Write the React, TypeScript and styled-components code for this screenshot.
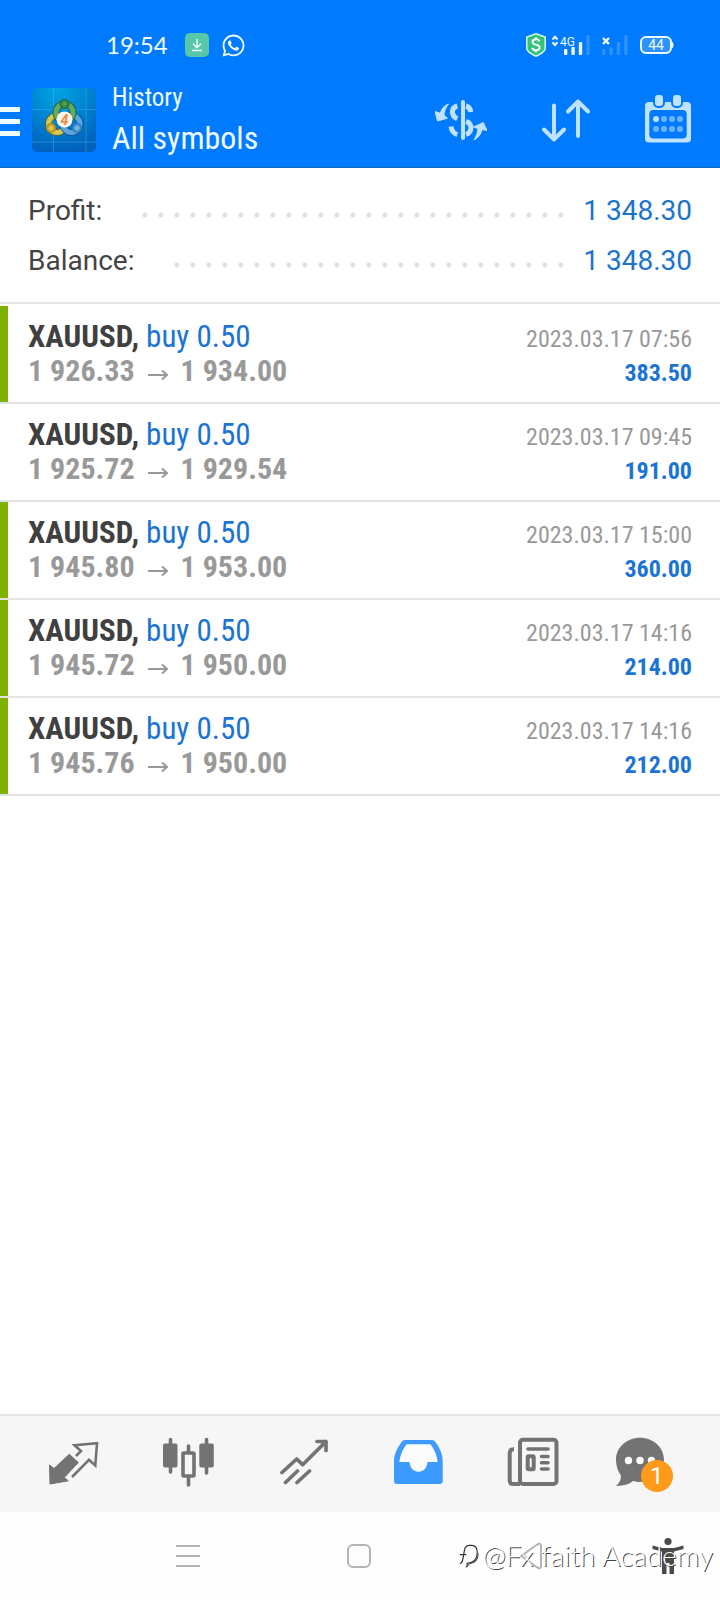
import React from "react";
import styled, { createGlobalStyle } from "styled-components";
import { FaWhatsapp } from "react-icons/fa";

const condensed = `"Roboto Condensed", "Liberation Sans Narrow", Roboto, sans-serif`;
const regular = `Roboto, sans-serif`;

const GlobalStyle = createGlobalStyle`
  * { box-sizing: border-box; }
  body { margin: 0; background: #fff; font-family: ${regular}; }
  h1, p, ul, dl, dd { margin: 0; padding: 0; }
  ul { list-style: none; }
  button { border: 0; padding: 0; background: none; font: inherit; color: inherit; cursor: pointer; }
  svg { display: block; flex: none; }
`;

const Page = styled.div`
  min-height: 100vh;
  display: flex;
  flex-direction: column;
`;

const Header = styled.header`
  background: #007aff;
  color: #effcff;
  border-bottom: 1px solid #1068b8;
`;

const StatusBar = styled.div`
  display: flex;
  align-items: center;
  justify-content: space-between;
  height: 72px;
  padding: 18px 46px 0 106px;
`;

const StatusGroup = styled.div<{ $gap: number }>`
  display: flex;
  align-items: center;
  gap: ${(p) => p.$gap}px;
`;

const Clock = styled.time`
  font: 400 24px/28px Lato, sans-serif;
  margin-right: 5px;
`;

const DownloadBadge = styled.span`
  display: grid;
  place-items: center;
  width: 24px;
  height: 24px;
  border-radius: 5px;
  background: #58c7a8;
`;

const AppBar = styled.div`
  display: flex;
  align-items: center;
  height: 95px;
  padding-right: 29px;
`;

const MenuButton = styled.button`
  display: grid;
  gap: 7px;
  width: 20px;
  margin-right: 12px;
  padding-top: 4px;
`;

const MenuLine = styled.span`
  height: 5px;
  background: #effcff;
`;

const Titles = styled.div`
  flex: 1;
  display: grid;
  gap: 4px;
  margin-left: 16px;
  font-family: ${condensed};
`;

const Overline = styled.p`
  font-size: 25px;
  line-height: 32px;
`;

const Title = styled.h1`
  font-size: 32px;
  line-height: 40px;
  font-weight: 400;
`;

const Actions = styled.div`
  display: flex;
  align-items: center;
  gap: 55px;
  color: #bfe2ff;
`;

const Summary = styled.dl`
  padding: 18px 28px 16px;
  border-bottom: 2px solid #e4e4e4;
  margin-bottom: 2px;
`;

const SummaryRow = styled.div`
  display: flex;
  align-items: center;
  font-size: 28px;
  line-height: 50px;
`;

const SummaryLabel = styled.dt`
  color: #444;
`;

const Leader = styled.span`
  flex: 1;
  height: 16px;
  margin: 8px 14px 0 34px;
  background: radial-gradient(circle, #e0e0e0 2px, transparent 3px) right center / 16px 16px repeat-x;
`;

const SummaryValue = styled.dd`
  color: #1b74cc;
`;

const Deals = styled.ul`
  flex: 1;
  font-family: ${condensed};
`;

const Deal = styled.li<{ $marked: boolean }>`
  padding: 14px 28px;
  border-bottom: 2px solid #e4e4e4;
  box-shadow: ${(p) => (p.$marked ? "inset 8px 0 #7fb000" : "none")};
`;

const DealLine = styled.div`
  display: flex;
  align-items: baseline;
  justify-content: space-between;
  height: 34px;
  line-height: 34px;
`;

const Order = styled.span`
  font-size: 31px;
  color: #1b74d4;
`;

const Symbol = styled.strong`
  color: #404040;
`;

const Prices = styled.span`
  display: flex;
  align-items: baseline;
  gap: 13px;
  font-size: 30px;
  font-weight: 700;
  color: #999;
`;

const Muted = styled.time`
  font-size: 24px;
  color: #999;
`;

const Gain = styled.strong`
  font-size: 24px;
  color: #1b74d4;
`;

const TabBar = styled.nav`
  display: grid;
  grid-template-columns: repeat(6, 1fr);
  height: 98px;
  padding: 0 15px 4px 17px;
  border-top: 2px solid #e4e4e4;
  background: #f6f6f6;
  color: #737373;
`;

const Tab = styled.button`
  display: grid;
  place-items: center;
`;

const BadgeHost = styled.span`
  position: relative;
  width: 64px;
`;

const Badge = styled.span`
  position: absolute;
  right: 7px;
  bottom: -5px;
  width: 32px;
  border-radius: 16px;
  background: #ff9a1a;
  color: #fff;
  font-size: 24px;
  line-height: 32px;
  text-align: center;
`;

const SystemNav = styled.nav`
  position: relative;
  display: grid;
  grid-template-columns: 172fr 172fr 172fr 104fr;
  height: 88px;
  padding-left: 102px;
  background: #fefefe;
  color: #b4b4b4;
`;

const Watermark = styled.p`
  position: absolute;
  right: 7px;
  top: 25px;
  display: flex;
  align-items: center;
  gap: 2px;
  font: 300 28px/36px Lato, sans-serif;
  color: #fff;
  text-shadow: 1px 1px 0 #444;
  pointer-events: none;
`;

const AppIcon = () => (
  <svg width="64" height="64" viewBox="0 0 64 64" aria-hidden="true">
    <defs>
      <radialGradient id="sky" cx=".4" cy="0" r="1">
        <stop offset="0" stopColor="#00a5e4" />
        <stop offset="1" stopColor="#0062bd" />
      </radialGradient>
      <radialGradient id="green"><stop offset="0" stopColor="#5fae5e" /><stop offset="1" stopColor="#1a6b34" /></radialGradient>
      <radialGradient id="gold"><stop offset="0" stopColor="#f4dd60" /><stop offset="1" stopColor="#a8820f" /></radialGradient>
      <radialGradient id="blue"><stop offset="0" stopColor="#8ccaf4" /><stop offset="1" stopColor="#2272b8" /></radialGradient>
    </defs>
    <rect width="64" height="64" rx="5" fill="url(#sky)" />
    <path d="M21.500 0V64M54 0V64M0 21.500H64M0 54H64" stroke="#5cc4f0" strokeOpacity=".35" />
    <g fill="none">
      <circle cx="25" cy="36" r="8.500" stroke="#5a6a20" strokeOpacity=".8" strokeWidth="7" />
      <circle cx="25" cy="36" r="8.500" stroke="#d8c552" strokeWidth="5" />
      <circle cx="39.500" cy="36" r="8.500" stroke="#14508c" strokeOpacity=".8" strokeWidth="7" />
      <circle cx="39.500" cy="36" r="8.500" stroke="#5ba6de" strokeWidth="5" />
      <circle cx="32.500" cy="24.500" r="8.500" stroke="#1c5f3c" strokeOpacity=".9" strokeWidth="7" />
      <circle cx="32.500" cy="24.500" r="8.500" stroke="#63ad62" strokeWidth="5" />
    </g>
    <circle cx="32.500" cy="16" r="5" fill="url(#green)" />
    <circle cx="19" cy="40" r="5" fill="url(#gold)" />
    <circle cx="45" cy="40" r="5" fill="url(#blue)" />
    <circle cx="32.500" cy="31.500" r="8" fill="#fff5ea" />
    <text x="32.500" y="36.500" textAnchor="middle" fontFamily="Roboto, sans-serif" fontWeight="700" fontStyle="italic" fontSize="14" fill="#f08a4a">4</text>
  </svg>
);

const signalTops = [16, 14, 9, 2];

const Signal = ({ x, strength }: { x: number; strength: number }) => (
  <g>
    {signalTops.map((top, i) => (
      <rect key={top} x={x + i * 7.4} y={top} width="3.400" height={22 - top} rx="1" fill={i < strength ? "#effcff" : "#2c92ff"} />
    ))}
  </g>
);

const SignalIcons = () => (
  <svg width="86" height="24" viewBox="0 0 86 24" aria-hidden="true">
    <path d="M2.500 6.500 5 3.800l2.500 2.700M2.500 9.300 5 12l2.500-2.700" fill="none" stroke="#effcff" strokeWidth="2" />
    <text x="10" y="12.500" fontFamily="Roboto, sans-serif" fontWeight="400" fontSize="12" fill="#effcff">4G</text>
    <Signal x={14} strength={3} />
    <path d="m53 5 6 6m0-6-6 6" stroke="#effcff" strokeWidth="2.400" />
    <Signal x={52} strength={0} />
  </svg>
);

const ShieldIcon = () => (
  <svg width="20" height="24" viewBox="0 0 20 24" aria-hidden="true">
    <path d="M10 .8 19.200 4v11.500c0 3-4.500 5.500-9.200 7.700C5.300 21 .8 18.500.8 15.500V4z" fill="#35c274" stroke="#c9f4e8" strokeWidth="1.600" />
    <path d="M13.500 8.500C13 6.800 11.500 6.300 10 6.300c-2 0-3.500 1-3.500 2.700 0 3.800 7.200 1.800 7.200 5.500 0 1.800-1.700 2.800-3.700 2.800-1.800 0-3.400-.8-3.800-2.600M10 4.300v2M10 17v2.300" fill="none" stroke="#effcff" strokeWidth="2" />
  </svg>
);

const BatteryIcon = () => (
  <svg width="34" height="18" viewBox="0 0 34 18" role="img" aria-label="Battery 44%">
    <rect x="1" y="1" width="30" height="16" rx="5" fill="#2c92ff" stroke="#effcff" strokeWidth="2" />
    <path d="M32 5.500c2 1.500 2 5.500 0 7z" fill="#effcff" />
    <text x="16" y="14" textAnchor="middle" fontFamily="Roboto, sans-serif" fontSize="14" fill="#effcff">44</text>
  </svg>
);

const CurrencyIcon = () => (
  <svg width="52" height="44" viewBox="0 0 52 44" fill="none" stroke="currentColor" strokeWidth="4">
    <path d="M28 4V40" strokeLinecap="round" />
    <path d="M22.300 8C18.800 9 17.200 11.800 17.400 14.500c.2 3.200 2 4.800 4.900 6.200M31 8c2.700.7 4.300 2.500 4.700 6M31 23.500c3.200 1 4.900 2.800 4.900 6.300 0 3.600-1.900 5.700-4.900 6.700M16 28.500c.5 4 2.700 7 6.300 8" strokeWidth="5" />
    <path d="M13.500 6C9 7.500 6.500 11 5.300 15.300L0 13.500 2.500 23l10-2.800-3.500-3C9.300 13 10.500 9.500 13.500 6zM39 42c4.500-2.500 7-5.500 8-10.500l5 1L48.300 24.500 38.500 29l4.500 1.500C42.500 34.500 41.500 38 39 42z" fill="currentColor" strokeWidth="1" strokeLinejoin="round" />
  </svg>
);

const SortIcon = () => (
  <svg width="48" height="44" viewBox="0 0 48 44" fill="none" stroke="currentColor" strokeWidth="4" strokeLinecap="round" strokeLinejoin="round">
    <path d="M12 7.500V41.500M2 31.500 12 41.500 22 31.500M36 38V3.500M26 13.500 36 3.500 46 13.500" />
  </svg>
);

const CalendarIcon = () => (
  <svg width="46" height="50" viewBox="0 0 46 50" fill="currentColor">
    <rect y="7" width="46" height="40.500" rx="4" />
    <rect x="4.300" y="15" width="37.400" height="28.500" rx="4" fill="#007aff" />
    <rect x="10" y="0" width="8" height="11" rx="3" stroke="#007aff" strokeWidth="4" paintOrder="stroke" />
    <rect x="28" y="0" width="8" height="11" rx="3" stroke="#007aff" strokeWidth="4" paintOrder="stroke" />
    {[11, 19, 27, 35].map((x, i) => (
      <g key={x}>
        <circle cx={x} cy="24" r="3" opacity={i === 0 ? 1 : 0.55} />
        <circle cx={x} cy="34" r="3" opacity=".55" />
      </g>
    ))}
  </svg>
);

const QuotesIcon = () => (
  <svg width="50" height="50" viewBox="0 -4 50 50">
    <path d="M.5 24 5 27.500 20.300 13.300 29.300 21.500 15.300 36.500 19.300 39.800 1 43z" fill="currentColor" stroke="currentColor" strokeLinejoin="round" />
    <path d="M27 15 32 10 25.500 4.300 48 2.300 46.300 24.500 40 18.800 23 36" fill="none" stroke="currentColor" strokeWidth="2.600" />
  </svg>
);

const ChartIcon = () => (
  <svg width="51" height="50" viewBox="0 0 51 50" stroke="currentColor" strokeWidth="3.600" strokeLinecap="round">
    <path d="M7.500 2.500V35M43.500 2.500V36M25.500 9V15M25.500 41V48" />
    <g strokeWidth="0" fill="currentColor">
      <rect y="6.500" width="14.500" height="24" rx="2" />
      <rect x="36.300" y="6.500" width="14.500" height="24" rx="2" />
    </g>
    <rect x="20" y="16" width="11" height="23" rx="1" fill="none" />
  </svg>
);

const TradeIcon = () => (
  <svg width="48" height="50" viewBox="0 -2 48 50" fill="none" stroke="currentColor" strokeWidth="3.700" strokeLinecap="round" strokeLinejoin="round">
    <path d="M2 33.500 16.700 20 22.700 25.700 46 2.500M37 2.500H46V11.500M5.500 43.500 17.500 32M17 43.500 29.500 32" />
  </svg>
);

const InboxIcon = () => (
  <svg width="49" height="50" viewBox="0 -3 49 50">
    <path d="M8 1.500Q9 0 11 0H38Q40 0 41 1.500C45.500 7.500 48.700 14 48.700 21V41Q48.700 44 45.700 44H3Q0 44 0 41V21C0 14 3.500 7.500 8 1.500z" fill="#3d9bff" />
    <path d="M12.500 4.300H36.500C40 9 43 15 43.700 22H33.500C33 28 29.500 31.800 24.500 31.800S16 28 15.500 22H5.300C6 15 9 9 12.500 4.300z" fill="#fbfbfb" />
  </svg>
);

const NewsIcon = () => (
  <svg width="52" height="50" viewBox="0 0 52 50" fill="none" stroke="currentColor" strokeWidth="4" strokeLinecap="round">
    <rect x="13" y="2.700" width="36.500" height="44.300" rx="3" />
    <path d="M7 12.300C4 12.300 2.700 13.500 2.700 16V43.500Q2.700 47 6.200 47H13" strokeLinecap="butt" />
    <path d="M21 12H41M34.500 19.500H41M34.500 25.700H41M34.500 32H41" strokeWidth="3.600" />
    <rect x="20.700" y="19.300" width="6" height="13" rx="1" />
  </svg>
);

const ChatIcon = () => (
  <svg width="48" height="50" viewBox="0 0 48 50">
    <path d="M24 .8C37.500.8 48 10.500 48 22.800S37.500 45 24 45c-2.500 0-4.700-.3-6.800-.9C12.500 47.500 7 49.200 0 49c3.500-3 5-6.500 5-10.500C2 34.500 0 29 0 22.800 0 10.500 10.500.8 24 .8z" fill="currentColor" />
    <g fill="#fff"><circle cx="12.500" cy="23.500" r="3.700" /><circle cx="24" cy="23.500" r="3.700" /><circle cx="35.500" cy="23.500" r="3.700" /></g>
  </svg>
);

const AccessibilityIcon = () => (
  <svg width="32" height="38" viewBox="0 0 32 38" fill="#4a4a4a">
    <circle cx="16" cy="4.500" r="3.600" />
    <path d="M.5 8.500 10 11H22L31.500 8.500V12L22 14.500V37H17.500V26H14.500V37H10V14.500L.5 12z" />
  </svg>
);

const WatermarkLogo = () => (
  <svg width="22" height="30" viewBox="0 0 24 30" fill="none" strokeWidth="1.300" aria-hidden="true">
    <path d="M2 24.500C4 24 5 22 5.500 18.500L7 10C7.500 6.500 9 4.500 12.500 4.500M2 14.500H9M12 4.500H15C19.500 4.500 21 8 21 12.500 21 20 17 23.500 10 24V28" stroke="#333" />
    <path d="M8.500 28.500 12 24.800C18 24 22 21 22 13" stroke="#555" />
  </svg>
);

const deals = [
  { open: "1 926.33", close: "1 934.00", time: "2023.03.17 07:56", gain: "383.50", marked: true },
  { open: "1 925.72", close: "1 929.54", time: "2023.03.17 09:45", gain: "191.00", marked: false },
  { open: "1 945.80", close: "1 953.00", time: "2023.03.17 15:00", gain: "360.00", marked: true },
  { open: "1 945.72", close: "1 950.00", time: "2023.03.17 14:16", gain: "214.00", marked: true },
  { open: "1 945.76", close: "1 950.00", time: "2023.03.17 14:16", gain: "212.00", marked: true },
];

const totals = [
  { label: "Profit:", value: "1 348.30" },
  { label: "Balance:", value: "1 348.30" },
];

export default function App() {
  return (
    <Page>
      <GlobalStyle />
      <Header>
        <StatusBar>
          <StatusGroup $gap={12}>
            <Clock>19:54</Clock>
            <DownloadBadge>
              <svg width="12" height="14" viewBox="0 0 12 14" fill="none" stroke="#effcff" strokeWidth="1.400">
                <path d="M6 1V9.500M2 5.800 6 9.800 10 5.800M1 12.500H11" />
              </svg>
            </DownloadBadge>
            <FaWhatsapp size={25} />
          </StatusGroup>
          <StatusGroup $gap={4}>
            <ShieldIcon />
            <SignalIcons />
            <BatteryIcon />
          </StatusGroup>
        </StatusBar>
        <AppBar>
          <MenuButton aria-label="Menu">
            <MenuLine />
            <MenuLine />
            <MenuLine />
          </MenuButton>
          <AppIcon />
          <Titles>
            <Overline>History</Overline>
            <Title>All symbols</Title>
          </Titles>
          <Actions>
            <button aria-label="Currency"><CurrencyIcon /></button>
            <button aria-label="Sort"><SortIcon /></button>
            <button aria-label="Period"><CalendarIcon /></button>
          </Actions>
        </AppBar>
      </Header>

      <Summary>
        {totals.map((t) => (
          <SummaryRow key={t.label}>
            <SummaryLabel>{t.label}</SummaryLabel>
            <Leader />
            <SummaryValue>{t.value}</SummaryValue>
          </SummaryRow>
        ))}
      </Summary>

      <Deals>
        {deals.map((d) => (
          <Deal key={d.gain} $marked={d.marked}>
            <DealLine>
              <Order><Symbol>XAUUSD,</Symbol> buy 0.50</Order>
              <Muted>{d.time}</Muted>
            </DealLine>
            <DealLine>
              <Prices>
                <span>{d.open}</span>
                <svg width="20" height="12" viewBox="0 0 20 12" fill="none" stroke="currentColor" strokeWidth="2" role="img" aria-label="to">
                  <path d="M0 6H19M14 1.500 19 6 14 10.500" />
                </svg>
                <span>{d.close}</span>
              </Prices>
              <Gain>{d.gain}</Gain>
            </DealLine>
          </Deal>
        ))}
      </Deals>

      <TabBar>
        <Tab aria-label="Quotes"><QuotesIcon /></Tab>
        <Tab aria-label="Charts"><ChartIcon /></Tab>
        <Tab aria-label="Trade"><TradeIcon /></Tab>
        <Tab aria-label="History"><InboxIcon /></Tab>
        <Tab aria-label="News"><NewsIcon /></Tab>
        <Tab aria-label="Messages">
          <BadgeHost>
            <ChatIcon />
            <Badge>1</Badge>
          </BadgeHost>
        </Tab>
      </TabBar>

      <SystemNav>
        <Tab aria-label="Recent apps">
          <svg width="24" height="24" viewBox="0 0 24 24" stroke="currentColor" strokeWidth="2"><path d="M0 2H24M0 12H24M0 22H24" /></svg>
        </Tab>
        <Tab aria-label="Home">
          <svg width="24" height="24" viewBox="0 0 24 24" fill="none" stroke="currentColor" strokeWidth="2"><rect x="1" y="1" width="22" height="22" rx="5" /></svg>
        </Tab>
        <Tab aria-label="Back">
          <svg width="24" height="28" viewBox="0 0 24 28" fill="none" stroke="currentColor" strokeWidth="2" strokeLinejoin="round"><path d="M19 2 2 14 19 26Q22 27 22 24V4Q22 1 19 2z" /></svg>
        </Tab>
        <Tab aria-label="Accessibility"><AccessibilityIcon /></Tab>
        <Watermark><WatermarkLogo />@Fx faith Academy</Watermark>
      </SystemNav>
    </Page>
  );
}
